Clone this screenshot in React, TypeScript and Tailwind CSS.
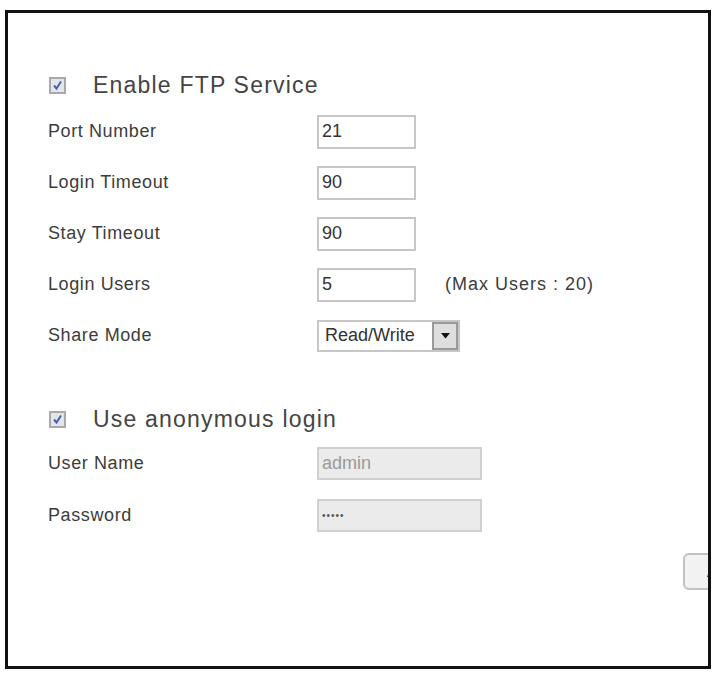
import React from 'react'

const font = { fontFamily: '"Liberation Sans", Arial, Helvetica, sans-serif' }

function CheckBox() {
  return (
    <div className="w-[17px] h-[17px] border-2 border-[#a9a9a9] bg-[#e2e5ec] flex items-center justify-center">
      <svg width="11" height="11" viewBox="0 0 11 11">
        <path d="M2 5.5 L4.5 8.5 L9 1.5" fill="none" stroke="#4a63a8" strokeWidth="2" />
      </svg>
    </div>
  )
}

function Heading({ label }: { label: string }) {
  return (
    <div className="flex items-center h-full">
      <div className="ml-[1px]">
        <CheckBox />
      </div>
      <span className="ml-[27px] text-[23px] tracking-[1.2px] text-[#444]">{label}</span>
    </div>
  )
}

function Label({ children }: { children: React.ReactNode }) {
  return <div className="w-[269px] text-[18px] tracking-[0.6px] text-[#3c3c3c]">{children}</div>
}

function TextBox({ value }: { value: string }) {
  return (
    <input
      readOnly
      value={value}
      className="w-[99px] h-[34px] border-2 border-[#c6c6c6] bg-white pl-[3px] text-[18px] text-[#333] outline-none"
      style={font}
    />
  )
}

function DisabledBox({ children }: { children: React.ReactNode }) {
  return (
    <div className="w-[165px] h-[33px] border-2 border-[#d0d0d0] bg-[#ebebeb] pl-[3px] flex items-center">
      {children}
    </div>
  )
}

function ShareSelect() {
  return (
    <div className="w-[143px] h-[32px] border-2 border-[#c6c6c6] bg-white flex items-stretch">
      <div className="flex-1 flex items-center pl-[6px] text-[18px] text-[#333]">Read/Write</div>
      <div className="w-[26px] border-2 border-[#9a9a9a] bg-[#dedede] flex items-center justify-center">
        <svg width="9" height="6" viewBox="0 0 9 6">
          <path d="M0 0 H9 L4.5 5.5 Z" fill="#111" />
        </svg>
      </div>
    </div>
  )
}

const rows = [
  { label: 'Port Number', value: '21' },
  { label: 'Login Timeout', value: '90' },
  { label: 'Stay Timeout', value: '90' },
  { label: 'Login Users', value: '5', note: '(Max Users : 20)' },
]

export default function App() {
  return (
    <div className="w-[714px] h-[673px] bg-white pt-[10px] pl-[5px]" style={font}>
      <div className="w-[706px] h-[659px] border-[3px] border-[#111] overflow-hidden pl-[40px] pt-[51px]">
        <div className="h-[42px]">
          <Heading label="Enable FTP Service" />
        </div>

        {rows.map((row) => (
          <div key={row.label} className="h-[51px] flex items-center">
            <Label>{row.label}</Label>
            <TextBox value={row.value} />
            {row.note && (
              <span className="ml-[29px] text-[18px] tracking-[1px] text-[#3c3c3c]">{row.note}</span>
            )}
          </div>
        ))}

        <div className="h-[51px] flex items-center">
          <Label>Share Mode</Label>
          <ShareSelect />
        </div>

        <div className="h-[36px] mt-[40px]">
          <Heading label="Use anonymous login" />
        </div>

        <div className="h-[52px] flex items-center">
          <Label>User Name</Label>
          <DisabledBox>
            <span className="text-[18px] text-[#9a9a9a]">admin</span>
          </DisabledBox>
        </div>

        <div className="h-[52px] flex items-center">
          <Label>Password</Label>
          <DisabledBox>
            <span className="text-[10px] tracking-[1px] text-[#555]">•••••</span>
          </DisabledBox>
        </div>

        <div className="mt-[12px] ml-[635px]">
          <button className="w-[80px] h-[37px] rounded-[6px] border-2 border-[#c2c2c2] bg-[#f2f2f2] text-left pl-[22px] text-[18px] text-[#222]">
            Apply
          </button>
        </div>
      </div>
    </div>
  )
}
